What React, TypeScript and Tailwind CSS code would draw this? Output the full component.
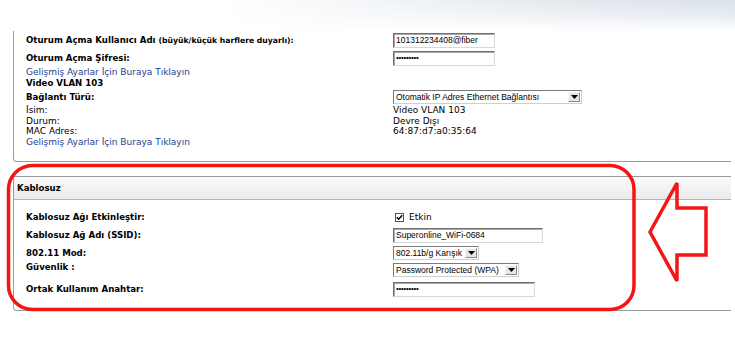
import React from "react";

const bold = "font-bold text-[8.6px] text-black leading-[11px] whitespace-nowrap";
const reg = "text-[9px] text-black leading-[10.5px] whitespace-nowrap";
const link = "text-[9px] text-[#23408e] leading-[10.5px] whitespace-nowrap";

function TextBox({ w, value, pw }: { w: string; value?: string; pw?: boolean }) {
  return (
    <div
      className={`${w} h-[15px] bg-white border border-t-[#6f6f6f] border-l-[#6f6f6f] border-r-[#d8d8d8] border-b-[#d8d8d8] shadow-[inset_1px_1px_0_#a9a9a9] flex items-center pl-[2px] font-['Liberation_Sans',sans-serif] text-[8.5px] text-black leading-none overflow-hidden whitespace-nowrap`}
    >
      {pw ? <span className="text-[8px] tracking-[-0.3px]">•••••••••</span> : value}
    </div>
  );
}

function Select({ w, value }: { w: string; value: string }) {
  return (
    <div
      className={`${w} h-[14px] bg-white border border-t-[#7a7a7a] border-l-[#7a7a7a] border-r-[#cfcfcf] border-b-[#cfcfcf] flex items-stretch font-['Liberation_Sans',sans-serif] text-[8.5px] text-black leading-none`}
    >
      <div className="flex-1 flex items-center pl-[2px] overflow-hidden whitespace-nowrap">{value}</div>
      <div className="w-[12px] m-[1px] bg-[#e6e6e6] border border-t-[#f8f8f8] border-l-[#f8f8f8] border-r-[#8a8a8a] border-b-[#8a8a8a] flex items-center justify-center">
        <svg width="7" height="4" viewBox="0 0 7 4">
          <polygon points="0,0 7,0 3.5,4" fill="#000" />
        </svg>
      </div>
    </div>
  );
}

export default function App() {
  return (
    <div className="relative w-[735px] h-[340px] overflow-hidden bg-white font-['DejaVu_Sans','Verdana',sans-serif]">
      {/* top gradient */}
      <div className="h-[31px] bg-[linear-gradient(to_right,#ffffff_30%,#e4e9ef_75%,#d9e1e9_100%)]">
        <div className="h-full bg-gradient-to-b from-transparent via-[rgba(255,255,255,0.4)] to-white" />
      </div>

      {/* panel 1 */}
      <div className="ml-[13px] w-[718px] border-l border-b border-[#9a9a9a] rounded-bl-[4px] pl-[12px] pb-[14px]">
        <div className="grid grid-cols-[367px_1fr]">
          <div className="h-[18px] flex items-center">
            <span className={bold}>
              Oturum Açma Kullanıcı Adı{" "}
              <span className="text-[7.7px]">(büyük/küçük harflere duyarlı):</span>
            </span>
          </div>
          <div className="h-[18px] flex items-center">
            <TextBox w="w-[102px]" value="101312234408@fiber" />
          </div>

          <div className="h-[18px] flex items-center">
            <span className={bold}>Oturum Açma Şifresi:</span>
          </div>
          <div className="h-[18px] flex items-center">
            <TextBox w="w-[102px]" pw />
          </div>
        </div>

        <div className="h-[11px] flex items-center">
          <span className={link}>Gelişmiş Ayarlar İçin Buraya Tıklayın</span>
        </div>
        <div className="h-[11px] flex items-center">
          <span className={bold}>Video VLAN 103</span>
        </div>

        <div className="grid grid-cols-[367px_1fr]">
          <div className="h-[16px] flex items-center">
            <span className={bold}>Bağlantı Türü:</span>
          </div>
          <div className="h-[16px] flex items-center">
            <Select w="w-[189px]" value="Otomatik IP Adres Ethernet Bağlantısı" />
          </div>

          <div className="flex flex-col">
            <span className={reg}>İsim:</span>
            <span className={reg}>Durum:</span>
            <span className={reg}>MAC Adres:</span>
          </div>
          <div className="flex flex-col">
            <span className={reg}>Video VLAN 103</span>
            <span className={reg}>Devre Dışı</span>
            <span className={reg}>64:87:d7:a0:35:64</span>
          </div>
        </div>
        <div className="flex">
          <span className={link}>Gelişmiş Ayarlar İçin Buraya Tıklayın</span>
        </div>
      </div>

      {/* panel 2 */}
      <div className="mt-[14px] ml-[13px] w-[718px] border-l border-t border-b border-[#9a9a9a] rounded-bl-[4px]">
        <div className="h-[23px] border-b border-[#b4b4b4] bg-gradient-to-b from-[#fbfbfb] to-[#ebebeb] flex items-center pl-[3px]">
          <span className={bold}>Kablosuz</span>
        </div>
        <div className="pl-[12px] pt-[8px] pb-[10px] grid grid-cols-[367px_1fr]">
          <div className="h-[18px] flex items-center">
            <span className={bold}>Kablosuz Ağı Etkinleştir:</span>
          </div>
          <div className="h-[18px] flex items-center gap-[5px] pl-[2px]">
            <div className="w-[9px] h-[9px] bg-white border border-[#555] flex items-center justify-center">
              <svg width="7" height="7" viewBox="0 0 7 7">
                <polyline points="0.8,3.2 2.7,5.2 6.2,1.2" fill="none" stroke="#000" strokeWidth="1.5" />
              </svg>
            </div>
            <span className={reg}>Etkin</span>
          </div>

          <div className="h-[18px] flex items-center">
            <span className={bold}>Kablosuz Ağ Adı (SSID):</span>
          </div>
          <div className="h-[18px] flex items-center">
            <TextBox w="w-[150px]" value="Superonline_WiFi-0684" />
          </div>

          <div className="h-[18px] flex items-center">
            <span className={bold}>802.11 Mod:</span>
          </div>
          <div className="h-[18px] flex items-center">
            <Select w="w-[86px]" value="802.11b/g Karışık" />
          </div>

          <div className="h-[16px] flex items-start">
            <span className={bold}>Güvenlik :</span>
          </div>
          <div className="h-[16px] flex items-start pt-[1px]">
            <Select w="w-[126px]" value="Password Protected (WPA)" />
          </div>

          <div className="h-[22px] flex items-center">
            <span className={bold}>Ortak Kullanım Anahtar:</span>
          </div>
          <div className="h-[22px] flex items-center">
            <TextBox w="w-[142px]" pw />
          </div>
        </div>
      </div>

      {/* red annotation */}
      <svg className="absolute left-0 top-0 pointer-events-none" width="735" height="340" viewBox="0 0 735 340">
        <rect x="8.5" y="165.5" width="625.5" height="144" rx="24" ry="24" fill="none" stroke="#f41616" strokeWidth="3.5" />
        <polygon
          points="650,232 677,183 677,208 706,208 706,255 677,255 677,281"
          fill="none"
          stroke="#f41616"
          strokeWidth="3.5"
          strokeLinejoin="miter"
        />
      </svg>
    </div>
  );
}
